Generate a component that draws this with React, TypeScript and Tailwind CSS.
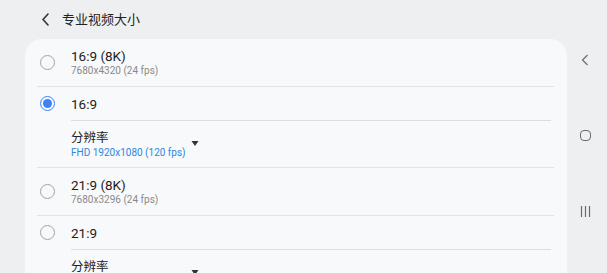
const font = { fontFamily: "Roboto, 'Noto Sans CJK SC', sans-serif" };

function Radio({ checked }: { checked?: boolean }) {
  return checked ? (
    <div className="flex h-[15px] w-[15px] items-center justify-center rounded-full border-[1.5px] border-[#3e82f7]">
      <div className="h-[9px] w-[9px] rounded-full bg-[#3e82f7]" />
    </div>
  ) : (
    <div className="h-[15px] w-[15px] rounded-full border-[1.3px] border-[#a3a3a5]" />
  );
}

function OptionRow({
  title,
  sub,
  checked,
  height,
}: {
  title: string;
  sub?: string;
  checked?: boolean;
  height: string;
}) {
  return (
    <div className={`flex shrink-0 items-center ${height}`}>
      <div className="flex w-[45px] justify-center">
        <Radio checked={checked} />
      </div>
      <div className="flex flex-col pl-[1px]">
        <span className="text-[13.5px] leading-[16px] text-[#222]">{title}</span>
        {sub && (
          <span className="text-[10px] leading-[14px] text-[#8a8a8a]">{sub}</span>
        )}
      </div>
    </div>
  );
}

function Resolution() {
  return (
    <div className="flex h-[46px] shrink-0 items-center pl-[46px]">
      <div className="flex items-center gap-[5px]">
        <div className="flex flex-col">
          <span className="text-[12.5px] leading-[17px] text-[#222]">分辨率</span>
          <span className="text-[10px] leading-[14px] text-[#2f87dc]">
            FHD 1920x1080 (120 fps)
          </span>
        </div>
        <svg width="8" height="6" viewBox="0 0 8 6" className="mt-[-1px]">
          <path d="M0.5 0 H7.5 L4 5 Z" fill="#333" />
        </svg>
      </div>
    </div>
  );
}

function Divider({ inset }: { inset?: boolean }) {
  return inset ? (
    <div className="ml-[46px] mr-[16px] h-px shrink-0 bg-[#dcdde0]" />
  ) : (
    <div className="ml-[12px] mr-[13px] h-px shrink-0 bg-[#e2e3e5]" />
  );
}

export default function App() {
  return (
    <div
      className="flex h-[273px] w-[607px] overflow-hidden bg-[#eeeff1]"
      style={font}
    >
      <div className="flex flex-1 flex-col overflow-hidden">
        <div className="flex h-[39px] shrink-0 items-center pl-[41px]">
          <svg width="9" height="13" viewBox="0 0 9 13">
            <path
              d="M7 1 L2 6.5 L7 12"
              fill="none"
              stroke="#333"
              strokeWidth="1.6"
              strokeLinecap="round"
              strokeLinejoin="round"
            />
          </svg>
          <span className="ml-[12px] text-[13px] text-[#222]">专业视频大小</span>
        </div>
        <div className="ml-[25px] flex shrink-0 flex-col rounded-t-[17px] bg-[#f8f9fb] pb-4">
          <OptionRow title="16:9 (8K)" sub="7680x4320 (24 fps)" height="h-[47px]" />
          <Divider />
          <OptionRow title="16:9" checked height="h-[33px]" />
          <Divider inset />
          <Resolution />
          <Divider />
          <OptionRow title="21:9 (8K)" sub="7680x3296 (24 fps)" height="h-[47px]" />
          <Divider />
          <OptionRow title="21:9" height="h-[33px]" />
          <Divider inset />
          <Resolution />
        </div>
      </div>
      <div className="flex w-[40px] shrink-0 flex-col items-center pr-[4px] pt-[54px]">
        <svg width="8" height="12" viewBox="0 0 8 12">
          <path
            d="M6.5 1 L1.5 6 L6.5 11"
            fill="none"
            stroke="#6b6b6d"
            strokeWidth="1.2"
          />
        </svg>
        <div className="mt-[64px] h-[11px] w-[11px] rounded-[4px] border-[1.3px] border-[#6b6b6d]" />
        <svg width="11" height="11" viewBox="0 0 11 11" className="mt-[65px]">
          <path d="M1.5 0 V11 M5.5 0 V11 M9.5 0 V11" stroke="#6b6b6d" strokeWidth="1.2" />
        </svg>
      </div>
    </div>
  );
}
